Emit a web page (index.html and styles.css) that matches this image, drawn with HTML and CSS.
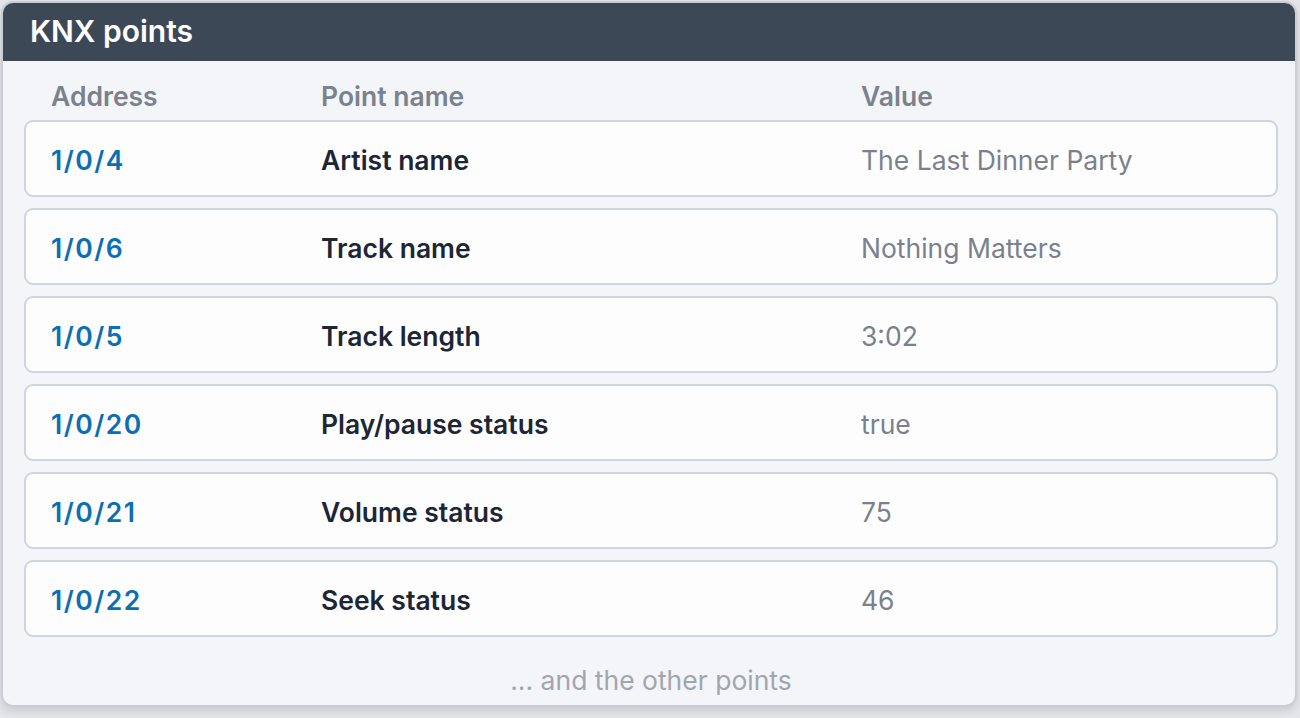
FILE: index.html
```html
<!DOCTYPE html>
<html>
<head>
<meta charset="utf-8">
<link rel="stylesheet" href="styles.css">
</head>
<body>
<div class="panel">
  <div class="panel-header">KNX points</div>
  <div class="panel-body">
    <div class="row head">
      <div>Address</div>
      <div>Point name</div>
      <div>Value</div>
    </div>
    <div class="row card"><div class="addr">1/0/4</div><div class="name">Artist name</div><div class="val">The Last Dinner Party</div></div>
    <div class="row card"><div class="addr">1/0/6</div><div class="name">Track name</div><div class="val">Nothing Matters</div></div>
    <div class="row card"><div class="addr">1/0/5</div><div class="name">Track length</div><div class="val">3:02</div></div>
    <div class="row card"><div class="addr">1/0/20</div><div class="name">Play/pause status</div><div class="val">true</div></div>
    <div class="row card"><div class="addr">1/0/21</div><div class="name">Volume status</div><div class="val">75</div></div>
    <div class="row card"><div class="addr">1/0/22</div><div class="name">Seek status</div><div class="val">46</div></div>
    <div class="more">... and the other points</div>
  </div>
</div>
</body>
</html>
```

FILE: styles.css
```css
html, body {
  margin: 0;
  padding: 0;
  background: #e4e6e9;
}
body {
  width: 1300px;
  height: 718px;
  overflow: hidden;
  padding: 1px 0 0 1px;
  box-sizing: border-box;
  font-family: "Inter", "Noto Sans", sans-serif;
}
.panel {
  width: 1296px;
  height: 706px;
  box-sizing: border-box;
  border: 2px solid #c9ced6;
  border-radius: 12px;
  background: #f3f5f8;
  overflow: hidden;
  box-shadow: 0 4px 10px rgba(0,0,0,0.12);
}
.panel-header {
  height: 58px;
  background: #3d4857;
  color: #ffffff;
  font-weight: 600;
  font-size: 30px;
  display: flex;
  align-items: center;
  padding-left: 27px;
  padding-bottom: 2px;
  box-sizing: border-box;
}
.panel-body {
  padding: 16px 17px 0 21px;
  display: flex;
  flex-direction: column;
  gap: 11px;
}
.row {
  display: grid;
  grid-template-columns: 270px 540px 1fr;
  align-items: center;
  font-size: 26.5px;
}
.head {
  height: 32px;
  box-sizing: border-box;
  padding: 3px 0 0 27px;
  color: #7b828d;
  font-weight: 600;
}
.card {
  height: 77px;
  box-sizing: border-box;
  border: 2px solid #d0d5dd;
  border-radius: 9px;
  background: #fdfdfe;
  padding: 3px 0 0 25px;
}
.addr {
  color: #0b6fb3;
  font-weight: 600;
  letter-spacing: 1.5px;
}
.name {
  color: #1d2635;
  font-weight: 600;
}
.val {
  color: #7a818d;
  font-weight: 400;
}
.more {
  text-align: center;
  color: #a1a6ae;
  font-size: 26.5px;
  margin-top: 16px;
}
```
